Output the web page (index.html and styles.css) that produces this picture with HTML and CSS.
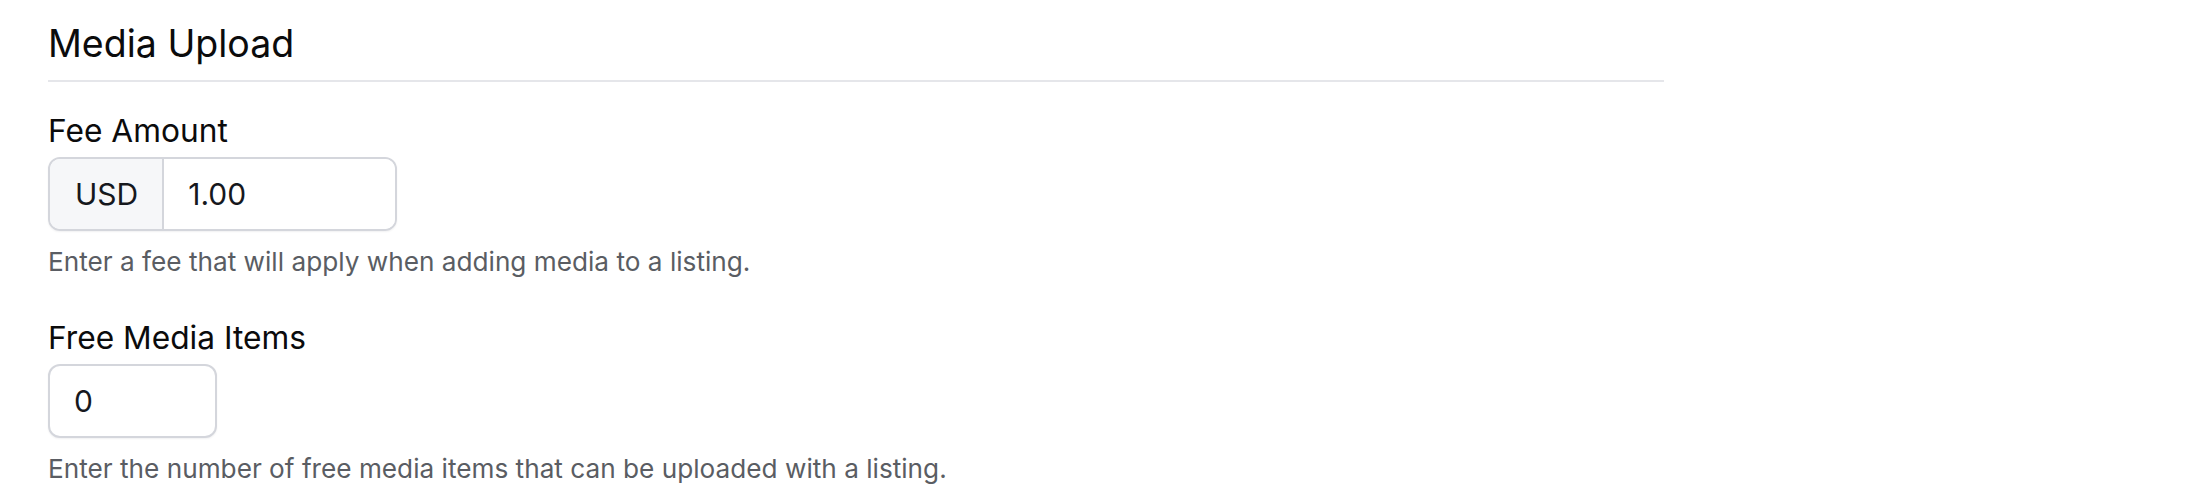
FILE: index.html
```html
<!DOCTYPE html>
<html lang="en">
<head>
<meta charset="utf-8">
<title>Media Upload</title>
<link rel="stylesheet" href="styles.css">
</head>
<body>
<section class="panel">
  <header class="panel-header">
    <h2 class="panel-title">Media Upload</h2>
  </header>
  <div class="field">
    <label class="field-label" for="fee">Fee Amount</label>
    <div class="input-group">
      <span class="input-prefix">USD</span>
      <input class="input-control input-grouped" id="fee" type="text" value="1.00">
    </div>
    <p class="field-help">Enter a fee that will apply when adding media to a listing.</p>
  </div>
  <div class="field">
    <label class="field-label" for="free">Free Media Items</label>
    <input class="input-control input-small" id="free" type="text" value="0">
    <p class="field-help">Enter the number of free media items that can be uploaded with a listing.</p>
  </div>
</section>
</body>
</html>
```

FILE: styles.css
```css
* { box-sizing: border-box; }

html, body {
  margin: 0;
  padding: 0;
  background: #ffffff;
}

body {
  font-family: "Inter", "Noto Sans", sans-serif;
  color: #0b0b0c;
}

.panel {
  width: 1664px;
  padding: 20px 0 0 48px;
}

.panel-header {
  border-bottom: 2px solid #e5e6ea;
  padding-bottom: 12px;
  margin-bottom: 29px;
}

.panel-title {
  margin: 0;
  font-size: 37.5px;
  line-height: 48px;
  font-weight: 400;
  color: #0b0b0c;
}

.field {
  margin-bottom: 38px;
}

.field:last-child {
  margin-bottom: 0;
}

.field-label {
  display: block;
  font-size: 31.7px;
  line-height: 40px;
  font-weight: 400;
  color: #0b0b0c;
  margin-bottom: 6px;
}

.input-group {
  display: flex;
  width: 349px;
  height: 74px;
  border: 2px solid #d4d6dc;
  border-radius: 12px;
  overflow: hidden;
  box-shadow: 0 1px 2px rgba(16, 24, 40, 0.06);
}

.input-prefix {
  display: flex;
  align-items: center;
  padding: 0 24px 0 25px;
  background: #f6f7f9;
  border-right: 2px solid #d4d6dc;
  font-size: 30px;
  color: #16181d;
}

.input-control {
  font-family: inherit;
  font-size: 30px;
  color: #16181d;
  background: #ffffff;
  outline: none;
  margin: 0;
}

.input-grouped {
  flex: 1;
  min-width: 0;
  border: 0;
  padding: 0 24px;
}

.input-small {
  display: block;
  width: 169px;
  height: 74px;
  padding: 0 24px;
  border: 2px solid #d4d6dc;
  border-radius: 12px;
  box-shadow: 0 1px 2px rgba(16, 24, 40, 0.06);
}

.field-help {
  margin: 13px 0 0;
  font-size: 26.2px;
  line-height: 36px;
  color: #5a5d63;
}
```
